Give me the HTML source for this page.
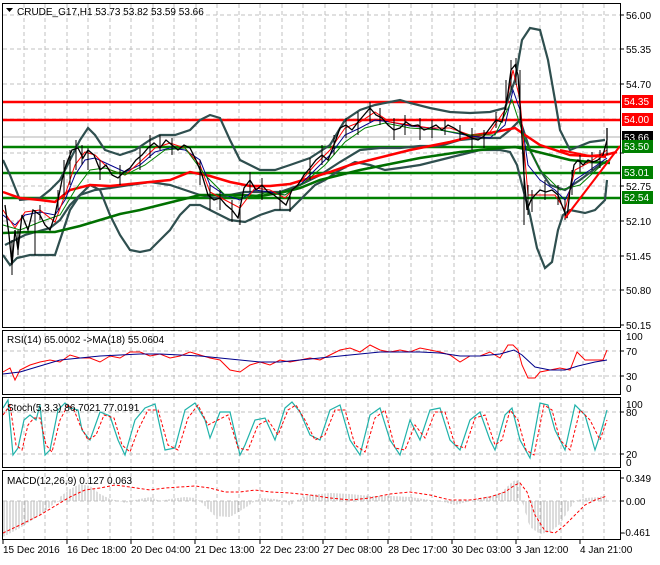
<!DOCTYPE html><html><head><style>
body{margin:0;background:#fff;width:660px;height:560px;overflow:hidden;font-family:"Liberation Sans",sans-serif}
svg text{font-family:"Liberation Sans",sans-serif;font-size:10px}
</style></head><body>
<svg width="660" height="560" xmlns="http://www.w3.org/2000/svg">
<rect width="660" height="560" fill="#fff"/>
<defs><pattern id="hb" width="3" height="10" patternUnits="userSpaceOnUse" x="3"><line x1="1" y1="0" x2="1" y2="10" stroke="#b8b8b8" stroke-width="1"/></pattern></defs>
<g stroke="#c0c0c0" stroke-dasharray="4,3" fill="none">
<path d="M24 4V539M45 4V539M67 4V539M88 4V539M110 4V539M131 4V539M153 4V539M174 4V539M196 4V539M217 4V539M239 4V539M260 4V539M282 4V539M303 4V539M325 4V539M346 4V539M368 4V539M389 4V539M411 4V539M432 4V539M454 4V539M475 4V539M497 4V539M518 4V539M540 4V539M561 4V539M583 4V539M604 4V539"/>
<path d="M3 15H620M3 49H620M3 84H620M3 119H620M3 153H620M3 186H620M3 221H620M3 256H620M3 290H620M3 351H620M3 376H620M3 412H620M3 454H620M3 501H620"/>
</g>
<line x1="3" y1="137" x2="620" y2="137" stroke="#b0b0b0"/>
<g stroke-width="2.5">
<line x1="3" y1="102" x2="620" y2="102" stroke="#f00"/>
<line x1="3" y1="120" x2="620" y2="120" stroke="#f00"/>
<line x1="3" y1="147" x2="620" y2="147" stroke="#008000"/>
<line x1="3" y1="173" x2="620" y2="173" stroke="#008000"/>
<line x1="3" y1="198" x2="620" y2="198" stroke="#008000"/>
</g>
<g fill="none" stroke="#2f4f4f" stroke-width="2.2">
<polyline points="3,160 10,175 20,200 40,198 50,190 60,180 70,160 80,140 88,128 95,135 105,150 120,155 135,150 150,140 160,135 175,135 190,130 200,120 210,115 220,118 230,140 240,160 250,165 260,170 275,170 290,165 310,158 330,145 345,120 360,110 375,105 390,102 400,100 410,103 430,108 450,112 470,113 490,112 505,108 515,80 522,40 530,28 540,30 548,60 555,100 560,130 570,150 590,142 605,140"/>
<polyline points="3,255 10,265 17,258 30,255 45,255 55,255 60,240 70,210 80,195 90,185 100,190 110,215 120,235 130,250 140,252 150,250 160,240 170,230 180,215 190,205 200,205 210,210 220,215 230,220 245,222 260,215 275,210 290,210 300,200 315,185 325,180 340,170 355,162 370,165 385,170 400,168 420,165 440,160 460,155 480,150 500,150 510,152 517,165 522,185 530,215 537,248 545,268 552,262 558,230 563,215 570,210 585,213 595,210 605,200 607,180"/>
<polyline points="5,245 15,240 25,235 50,228 60,220 70,205 80,195 95,190 110,188 130,185 150,182 170,185 185,190 200,195 215,198 230,195 245,192 260,192 280,192 300,185 320,175 340,162 360,150 380,148 400,148 420,146 440,146 460,140 480,138 500,138 510,130 520,120 530,150 540,170 550,185 565,190 580,180 600,165 610,160"/>
</g>
<polyline fill="none" stroke="#f00" stroke-width="2.5" points="3,192 20,198 40,200 55,202 70,190 90,185 110,186 130,184 150,182 170,180 190,172 210,176 230,182 250,186 270,186 290,184 310,178 330,172 350,165 370,160 390,155 410,150 430,146 450,142 470,137 490,133 505,130 515,128 525,135 540,145 555,150 570,155 590,156 605,155 617,152"/>
<polyline fill="none" stroke="#007000" stroke-width="2.5" points="3,233 30,232 55,232 80,226 100,220 120,214 140,210 160,205 180,200 200,195 220,195 240,195 260,196 280,193 300,188 320,180 340,175 360,170 380,166 400,162 420,158 440,155 460,152 480,150 500,148 515,147 530,150 550,155 570,160 590,162 610,163"/>
<polyline fill="none" stroke="#00008b" stroke-width="1" points="3,215 15,225 25,215 40,212 55,215 65,200 75,175 85,160 95,158 110,165 125,172 140,165 155,152 170,148 185,150 200,160 210,185 225,195 240,200 255,190 270,192 285,195 300,185 315,170 330,155 345,135 360,128 375,120 390,122 410,126 430,128 450,132 470,136 490,138 505,125 513,90 520,110 528,165 540,180 555,190 565,200 575,180 590,170 607,158"/>
<polyline fill="none" stroke="#f00" stroke-width="1" points="3,210 15,228 25,212 40,210 55,222 65,195 75,165 85,152 95,155 110,170 125,175 140,162 155,148 170,143 185,148 200,165 210,192 225,200 240,208 255,188 270,190 285,198 300,182 315,165 330,150 345,128 360,122 375,112 390,122 410,125 430,128 450,128 470,135 490,132 505,110 513,70 520,100 528,195 540,195 555,195 565,210 575,170 590,162 607,150"/>
<polyline fill="none" stroke="#008000" stroke-width="1" points="3,225 20,230 40,222 60,215 75,190 90,170 105,168 125,175 145,165 165,150 185,148 205,175 225,195 245,198 265,193 285,195 305,182 325,165 345,142 365,128 385,123 410,128 440,130 470,135 495,135 512,100 525,140 540,170 560,190 580,185 607,160"/>
<polyline fill="none" stroke="#000" stroke-width="1.3" points="5,205 9,235 12,265 15,230 18,250 22,215 28,230 33,210 40,215 45,225 50,230 55,215 58,200 62,180 66,165 72,150 78,148 83,158 88,150 94,155 100,170 106,165 112,175 118,178 124,172 130,168 136,160 142,155 148,148 154,143 160,148 166,140 172,145 178,150 184,145 190,148 196,160 202,175 208,195 214,200 220,198 226,205 232,210 238,218 244,188 250,180 256,190 262,185 268,192 274,195 280,200 286,205 292,190 298,185 304,175 310,168 316,160 322,155 328,160 334,145 340,128 346,125 352,130 358,122 364,115 370,108 376,115 382,118 388,125 394,130 400,128 406,122 412,126 418,125 424,130 430,128 436,125 442,130 448,125 454,128 460,132 466,135 472,138 478,140 484,136 490,128 496,120 502,122 507,100 511,70 515,65 518,75 521,120 524,175 527,210 531,200 535,195 540,190 546,192 552,190 558,195 563,208 567,218 570,190 574,165 578,160 583,165 588,160 593,162 598,160 603,155 607,140 607,128"/>
<g stroke="#000" stroke-width="1">
<path d="M12 240V275M18 230V255M35 210V255M40 205V220M58 190V210M64 160V195M70 150V185M76 140V170M82 145V165M88 148V170M100 160V180M120 165V185M140 148V170M150 135V158M160 135V150M172 138V155M200 160V185M210 185V210M220 190V210M232 200V222M240 205V225M250 172V192M262 178V200M280 190V210M290 195V212M310 158V180M322 145V165M334 135V155M346 118V138M358 112V135M370 102V122M380 108V125M394 118V140M405 115V135M420 118V140M432 120V138M445 120V135M460 125V140M472 128V150M484 130V148M496 112V128M506 80V110M511 60V90M516 58V85M520 70V120M524 150V225M528 185V215M532 190V212M545 180V200M558 185V205M565 200V220M572 170V195M580 155V172M592 152V170M600 150V168M607 130V155"/>
</g>
<g stroke="#f00" stroke-width="2" fill="none"><line x1="565" y1="218" x2="620" y2="146"/><polyline points="560,150 590,156 606,157"/></g>
<polyline fill="none" stroke="#f00" points="3,372 10,368 15,380 20,370 30,365 40,362 50,360 60,362 70,355 80,358 90,358 100,362 110,356 120,358 130,352 140,352 150,356 160,354 170,358 180,356 190,352 200,355 210,358 220,360 230,370 240,372 250,365 260,362 270,365 280,360 290,362 300,360 310,358 320,360 330,355 340,350 350,348 360,352 370,345 380,350 390,352 400,350 410,352 420,348 430,350 440,352 450,355 460,362 470,356 480,356 490,352 500,358 508,345 513,345 518,350 522,365 528,378 535,378 540,372 550,370 560,368 570,370 577,352 585,360 595,360 603,360 607,350"/>
<polyline fill="none" stroke="#00008b" points="3,374 20,372 40,366 60,360 80,358 100,356 120,355 140,354 160,354 180,355 200,356 220,358 240,360 260,362 280,362 300,360 320,358 340,356 360,354 380,352 400,352 420,352 440,353 460,356 480,356 500,354 514,350 522,355 535,367 550,370 565,370 578,366 595,362 607,360"/>
<polyline fill="none" stroke="#20b2aa" stroke-width="1.2" points="3,408 8,400 13,455 18,448 24,420 30,415 36,420 40,405 45,455 50,450 58,410 65,403 70,408 78,410 82,430 90,440 100,412 110,416 118,440 125,455 135,420 145,408 155,404 165,450 175,448 185,410 195,403 205,420 210,438 220,412 230,412 240,455 245,445 255,420 265,418 275,440 285,408 292,402 300,412 310,435 320,440 330,410 340,405 350,440 360,455 370,415 380,408 390,440 400,455 410,420 420,440 430,410 440,408 450,440 460,450 470,420 480,412 490,440 495,450 505,415 512,408 520,440 530,458 540,403 548,405 555,430 565,450 575,405 585,415 595,450 600,435 607,410"/>
<polyline fill="none" stroke="#f00" stroke-dasharray="3,2" points="3,415 10,405 16,445 22,450 28,425 34,418 40,418 46,445 52,452 60,420 68,405 74,410 80,425 88,440 96,435 104,415 114,418 122,445 130,452 138,430 148,410 158,410 168,445 178,450 188,418 198,405 208,425 218,420 228,415 238,448 248,450 258,425 268,420 278,435 288,410 296,405 305,420 315,440 325,435 335,410 345,410 355,445 365,452 375,418 385,410 395,448 405,450 415,425 425,438 435,412 445,412 455,445 465,448 475,418 485,415 495,445 502,440 510,410 518,420 526,450 534,455 544,405 552,410 560,440 570,450 580,410 590,420 600,440 607,420"/>
<!-- MACD histogram as patterned polygon -->
<polygon fill="url(#hb)" points="3,501 3,537 20,528 40,515 55,503 60,501 60,497 70,489 80,484 90,486 100,494 110,499 120,501 125,503 135,500 150,497 160,501 170,499 185,497 195,498 200,501 215,516 230,517 245,508 255,501 260,498 275,499 285,501 290,506 295,501 310,495 330,493 350,494 370,496 390,496 410,497 430,500 440,501 455,505 470,501 485,497 500,494 510,484 515,480 520,482 522,501 530,527 540,534 550,532 560,524 570,508 575,501 585,498 600,497 606,493 607,501"/>
<polyline fill="none" stroke="#f00" stroke-dasharray="3,2" points="3,533 20,525 40,515 55,506 70,497 85,490 100,488 115,485 130,487 150,490 165,488 180,487 195,486 210,488 225,492 240,492 255,490 270,492 290,493 310,495 330,498 350,500 370,498 390,494 410,492 430,495 450,500 470,500 490,497 505,492 515,485 520,483 527,492 535,515 545,531 555,533 565,525 575,515 585,505 595,500 607,496"/>
<g stroke="#000" fill="none">
<rect x="2.5" y="3.5" width="618" height="324"/>
<rect x="2.5" y="330.5" width="618" height="64"/>
<rect x="2.5" y="397.5" width="618" height="70"/>
<rect x="2.5" y="470.5" width="618" height="69"/>
</g>
<g stroke="#000"><path d="M620 15h4M620 49h4M620 84h4M620 153h4M620 186h4M620 221h4M620 256h4M620 290h4M620 325h4M620 351h4M620 376h4M620 412h4M620 454h4M620 478h4M620 501h4M620 533h4M3 540v4M67 540v4M131 540v4M195 540v4M260 540v4M323 540v4M388 540v4M452 540v4M516 540v4M580 540v4"/></g>
<g fill="#000">
<path d="M6 8h7l-3.5 4z"/>
<text x="17" y="15">CRUDE_G17,H1  53.73 53.82 53.59 53.66</text>
<text x="626" y="19">56.00</text><text x="626" y="53">55.35</text><text x="626" y="88">54.70</text>
<text x="626" y="190">52.75</text><text x="626" y="225">52.10</text><text x="626" y="260">51.45</text>
<text x="626" y="294">50.80</text><text x="626" y="329">50.15</text>
<text x="626" y="340">100</text><text x="626" y="355">70</text><text x="626" y="380">30</text><text x="626" y="392">0</text>
<text x="626" y="408">100</text><text x="626" y="416">80</text><text x="626" y="458">20</text><text x="626" y="466">0</text>
<text x="626" y="482">0.349</text><text x="626" y="505">0.00</text><text x="622" y="536">-0.461</text>
<text x="7" y="343">RSI(14) 65.0002  -&gt;MA(18) 55.0604</text>
<text x="7" y="411">Stoch(5,3,3) 86.7021 77.0191</text>
<text x="7" y="484">MACD(12,26,9) 0.127 0.063</text>
<text x="3" y="553">15 Dec 2016</text><text x="67" y="553">16 Dec 18:00</text><text x="131" y="553">20 Dec 04:00</text>
<text x="195" y="553">21 Dec 13:00</text><text x="260" y="553">22 Dec 23:00</text><text x="323" y="553">27 Dec 08:00</text>
<text x="388" y="553">28 Dec 17:00</text><text x="452" y="553">30 Dec 03:00</text><text x="516" y="553">3 Jan 12:00</text><text x="580" y="553">4 Jan 21:00</text>
</g>
<rect x="622" y="95" width="31" height="13" fill="#f00"/><text x="624" y="105" fill="#fff">54.35</text>
<rect x="622" y="113" width="31" height="13" fill="#f00"/><text x="624" y="123" fill="#fff">54.00</text>
<rect x="622" y="131" width="31" height="12" fill="#000"/><text x="624" y="141" fill="#fff">53.66</text>
<rect x="622" y="140" width="31" height="13" fill="#008000"/><text x="624" y="150" fill="#fff">53.50</text>
<rect x="622" y="166" width="31" height="13" fill="#008000"/><text x="624" y="176" fill="#fff">53.01</text>
<rect x="622" y="191" width="31" height="13" fill="#008000"/><text x="624" y="201" fill="#fff">52.54</text>
</svg>
</body></html>
